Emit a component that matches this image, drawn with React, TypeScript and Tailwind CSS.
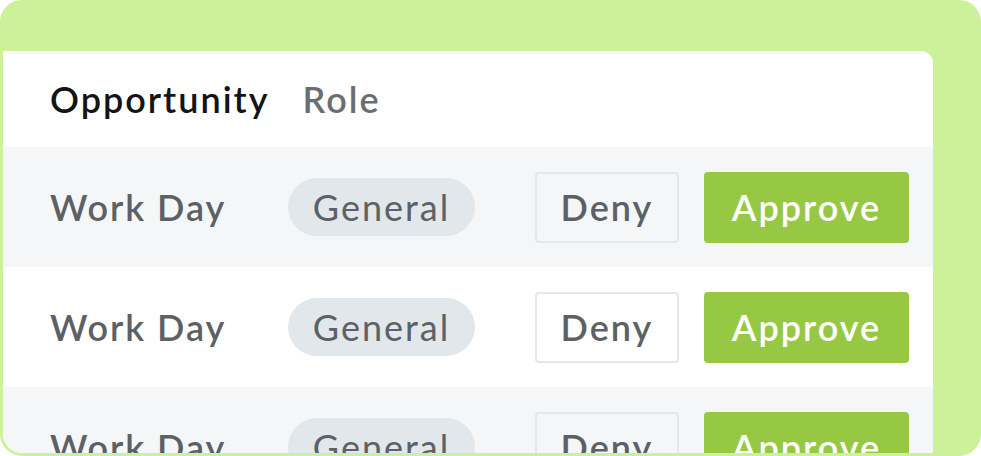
export default function App() {
  const rows = [1, 2, 3];

  return (
    <div className="h-[456px] w-[981px] overflow-hidden bg-white">
      <div
        className="h-[456px] w-[981px] overflow-hidden rounded-[22px] border-[3px] border-[#cdf09a] bg-[#cdf09a] pt-[48px]"
        style={{ fontFamily: "Lato, 'Noto Sans', sans-serif" }}
      >
        <div className="w-[930px] rounded-tr-[12px] bg-white">
          <div className="flex h-[96px] items-center gap-[33px] pl-[47px] text-[36px] font-semibold tracking-[2px]">
            <span className="text-[#141414]">Opportunity</span>
            <span className="text-[#6b6e70]">Role</span>
          </div>

          {rows.map((row) => (
            <div
              key={row}
              className={`flex h-[120px] items-center pl-[47px] pr-[24px] text-[36px] tracking-[2px] ${
                row % 2 === 1 ? "bg-[#f4f6f8]" : "bg-white"
              }`}
            >
              <span className="w-[238px] font-semibold text-[#5c6166]">Work Day</span>
              <span className="flex h-[58px] w-[187px] items-center justify-center rounded-full bg-[#e1e7ea] text-[#5c6166]">
                General
              </span>
              <div className="ml-auto flex items-center gap-[25px]">
                <button className="flex h-[71px] w-[144px] items-center justify-center rounded-[4px] border-2 border-[#e3e8ea] font-semibold text-[#5c6166]">
                  Deny
                </button>
                <button className="flex h-[71px] w-[205px] items-center justify-center rounded-[4px] bg-[#97c843] font-semibold text-white">
                  Approve
                </button>
              </div>
            </div>
          ))}
        </div>
      </div>
    </div>
  );
}
